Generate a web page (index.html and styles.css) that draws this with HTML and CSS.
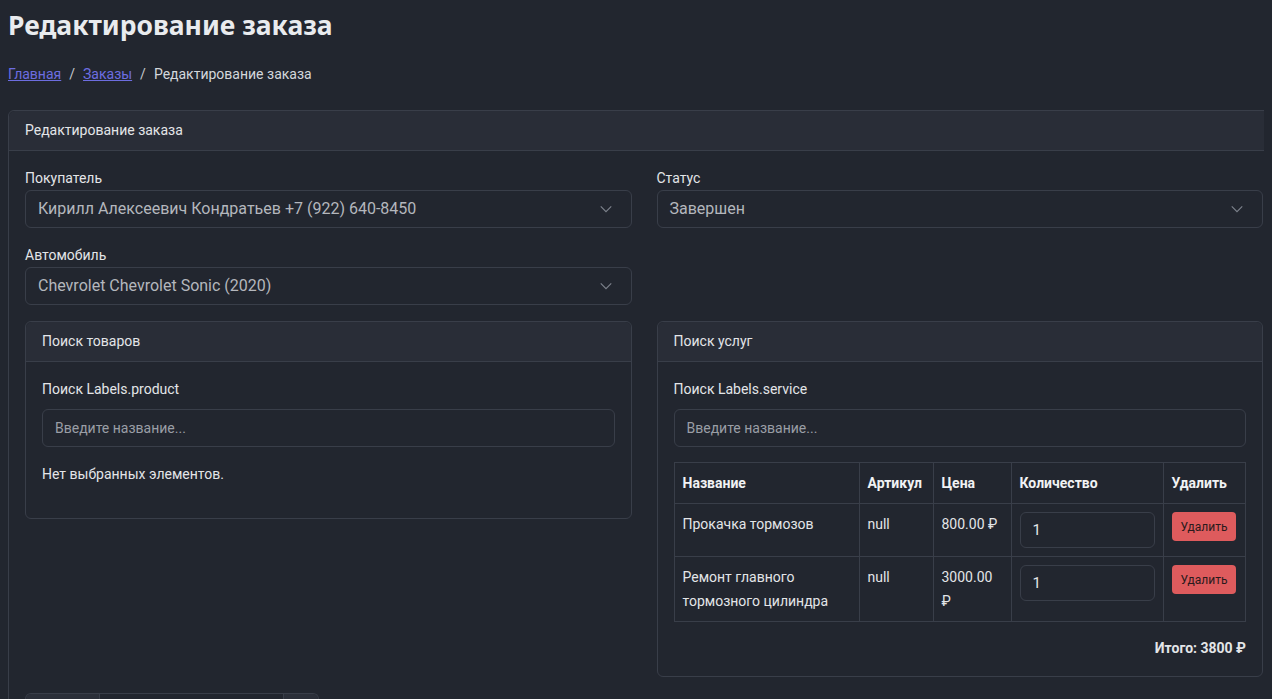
FILE: index.html
```html
<!DOCTYPE html>
<html lang="ru">
<head>
<meta charset="utf-8">
<title>Редактирование заказа</title>
<link rel="stylesheet" href="styles.css">
</head>
<body>
<div class="page">
  <h1 class="title">Редактирование заказа</h1>
  <nav class="breadcrumb">
    <a href="#">Главная</a><span class="sep">/</span><a href="#">Заказы</a><span class="sep">/</span><span class="current">Редактирование заказа</span>
  </nav>

  <div class="card main-card">
    <div class="card-header">Редактирование заказа</div>
    <div class="card-body">
      <div class="row">
        <div class="col">
          <div class="field">
            <label class="label">Покупатель</label>
            <div class="select">
              <span>Кирилл Алексеевич Кондратьев +7 (922) 640-8450</span>
              <svg class="chev" viewBox="0 0 16 16" width="14" height="14"><path d="M2 5l6 6 6-6" fill="none" stroke="#7d828c" stroke-width="1.3"/></svg>
            </div>
          </div>
          <div class="field">
            <label class="label">Автомобиль</label>
            <div class="select">
              <span>Chevrolet Chevrolet Sonic (2020)</span>
              <svg class="chev" viewBox="0 0 16 16" width="14" height="14"><path d="M2 5l6 6 6-6" fill="none" stroke="#7d828c" stroke-width="1.3"/></svg>
            </div>
          </div>
        </div>
        <div class="col">
          <div class="field">
            <label class="label">Статус</label>
            <div class="select">
              <span>Завершен</span>
              <svg class="chev" viewBox="0 0 16 16" width="14" height="14"><path d="M2 5l6 6 6-6" fill="none" stroke="#7d828c" stroke-width="1.3"/></svg>
            </div>
          </div>
        </div>
      </div>

      <div class="row row-cards">
        <div class="col">
          <div class="card">
            <div class="card-header inner">Поиск товаров</div>
            <div class="card-body">
              <label class="label search-label">Поиск Labels.product</label>
              <div class="input placeholder">Введите название...</div>
              <p class="empty">Нет выбранных элементов.</p>
            </div>
          </div>
        </div>
        <div class="col">
          <div class="card">
            <div class="card-header inner">Поиск услуг</div>
            <div class="card-body">
              <label class="label search-label">Поиск Labels.service</label>
              <div class="input placeholder">Введите название...</div>
              <table class="table">
                <thead>
                  <tr>
                    <th class="c-name">Название</th>
                    <th class="c-art">Артикул</th>
                    <th class="c-price">Цена</th>
                    <th class="c-qty">Количество</th>
                    <th class="c-del">Удалить</th>
                  </tr>
                </thead>
                <tbody>
                  <tr>
                    <td>Прокачка тормозов</td>
                    <td>null</td>
                    <td>800.00 ₽</td>
                    <td><div class="qty">1</div></td>
                    <td><button class="btn-del">Удалить</button></td>
                  </tr>
                  <tr>
                    <td>Ремонт главного тормозного цилиндра</td>
                    <td>null</td>
                    <td>3000.00 ₽</td>
                    <td><div class="qty">1</div></td>
                    <td><button class="btn-del">Удалить</button></td>
                  </tr>
                </tbody>
              </table>
              <div class="total">Итого: 3800 ₽</div>
            </div>
          </div>
        </div>
      </div>

      <div class="bottom-group">
        <div class="bg-a"></div>
        <div class="bg-b"></div>
        <div class="bg-c"></div>
      </div>
    </div>
  </div>
</div>
</body>
</html>
```

FILE: styles.css
```css
html {
  background: #22262f;
  overflow: hidden;
}
body {
  margin: 8px;
  background: #22262f;
  color: #e3e5e8;
  font-family: Roboto, "Liberation Sans", sans-serif;
  font-size: 15px;
  line-height: 1.5;
}
.page {
  width: 1272px;
}
.title {
  margin: 0 0 22px;
  font-family: "Noto Sans", sans-serif;
  font-size: 26.5px;
  font-weight: 700;
  line-height: 34px;
  color: #e9ebee;
}
.breadcrumb {
  font-size: 14px;
  line-height: 21px;
  margin-bottom: 25px;
  color: #d4d7dc;
}
.breadcrumb a {
  color: #6d6de0;
  text-decoration: underline;
}
.sep {
  margin: 0 8px;
  color: #c5c8cd;
}
.card {
  border: 1px solid #393e49;
  border-radius: 6px;
  background: #22262f;
}
.card-header {
  background: #292d37;
  border-bottom: 1px solid #393e49;
  padding: 0 16px;
  height: 39px;
  line-height: 39px;
  font-size: 14px;
  color: #e3e5e8;
  border-radius: 6px 6px 0 0;
}
.card-body {
  padding: 16px;
}
.row {
  display: flex;
  gap: 25px;
}
.col {
  flex: 1 1 0;
  min-width: 0;
}
.field {
  margin-bottom: 16px;
}
.label {
  display: block;
  font-size: 14px;
  line-height: 22px;
  margin-bottom: 1px;
  color: #e3e5e8;
}
.select {
  height: 36px;
  border: 1px solid #393e49;
  border-radius: 6px;
  padding: 0 12px;
  display: flex;
  align-items: center;
  justify-content: space-between;
  font-size: 16px;
  color: #b4b7bd;
}
.chev {
  margin-right: 6px;
}
.row-cards {
  align-items: flex-start;
}
.search-label {
  margin-bottom: 9px;
}
.input {
  height: 36px;
  border: 1px solid #393e49;
  border-radius: 6px;
  padding: 0 12px;
  display: flex;
  align-items: center;
  font-size: 14px;
}
.placeholder {
  color: #9a9ea6;
}
.empty {
  margin: 16px 0 17px;
  line-height: 22px;
  font-size: 14px;
}
.table {
  margin-top: 15px;
  width: 100%;
  border-collapse: collapse;
  font-size: 14px;
  line-height: 24px;
}
.table th,
.table td {
  border: 1px solid #393e49;
  padding: 8px;
  text-align: left;
  vertical-align: top;
}
.table th {
  font-weight: 700;
  color: #f1f2f4;
}
.table td {
  color: #e3e5e8;
}
.c-name { width: 168px; }
.c-art { width: 57px; }
.c-price { width: 61px; }
.c-qty { width: 135px; }
.qty {
  height: 34px;
  border: 1px solid #393e49;
  border-radius: 6px;
  padding: 0 12px;
  display: flex;
  align-items: center;
  font-size: 15px;
}
.btn-del {
  border: none;
  background: #de5b5d;
  color: #2a1a1c;
  border-radius: 4px;
  font-family: Roboto, "Liberation Sans", sans-serif;
  font-size: 12px;
  height: 29px;
  padding: 0 9px;
}
.total {
  text-align: right;
  font-weight: 700;
  font-size: 14px;
  margin-top: 14px;
  line-height: 24px;
  color: #e3e5e8;
}
.bottom-group {
  margin-top: 16px;
  display: flex;
  width: 292px;
  height: 20px;
  border: 1px solid #393e49;
  border-bottom: none;
  border-radius: 6px 6px 0 0;
  overflow: hidden;
}
.bg-a { width: 73px; background: #2b2f39; }
.bg-b { flex: 1; background: #22262f; border-left: 1px solid #393e49; border-right: 1px solid #393e49; }
.bg-c { width: 34px; background: #2b2f39; }
```
